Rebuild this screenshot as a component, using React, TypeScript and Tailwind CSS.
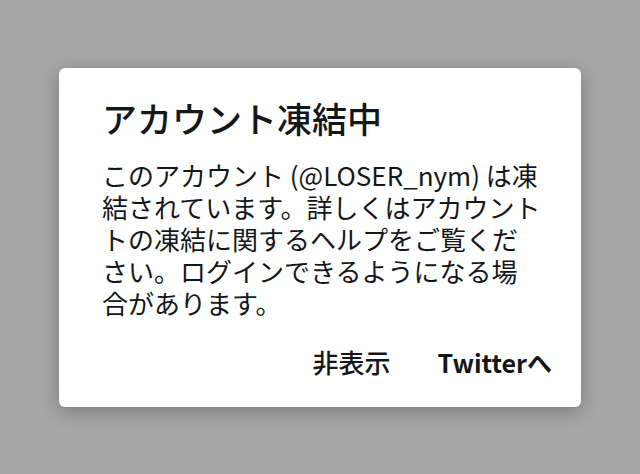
export default function App() {
  const jp = { fontFamily: '"Noto Sans CJK JP", "Noto Sans", sans-serif' };
  return (
    <div className="w-[640px] h-[474px] bg-[#a6a6a6] flex items-start justify-center pt-[68px]" style={jp}>
      <div className="w-[522px] h-[339px] rounded-md bg-white shadow-[0_4px_18px_rgba(0,0,0,0.28)] flex flex-col pt-[29px] pl-[43px] pr-[29px] text-[#14171a]">
        <h1 className="text-[35px] leading-[41px] font-medium whitespace-nowrap">アカウント凍結中</h1>
        <p className="mt-[21px] text-[26px] leading-[32px] whitespace-nowrap">
          このアカウント (@LOSER_nym) は凍
          <br />
          結されています。詳しくはアカウント
          <br />
          トの凍結に関するヘルプをご覧くだ
          <br />
          さい。ログインできるようになる場
          <br />
          合があります。
        </p>
        <div className="mt-[27px] flex justify-end items-center gap-[47px] text-[25px] leading-[32px]">
          <button className="font-medium text-[26px]">非表示</button>
          <button className="font-bold">Twitterへ</button>
        </div>
      </div>
    </div>
  );
}
